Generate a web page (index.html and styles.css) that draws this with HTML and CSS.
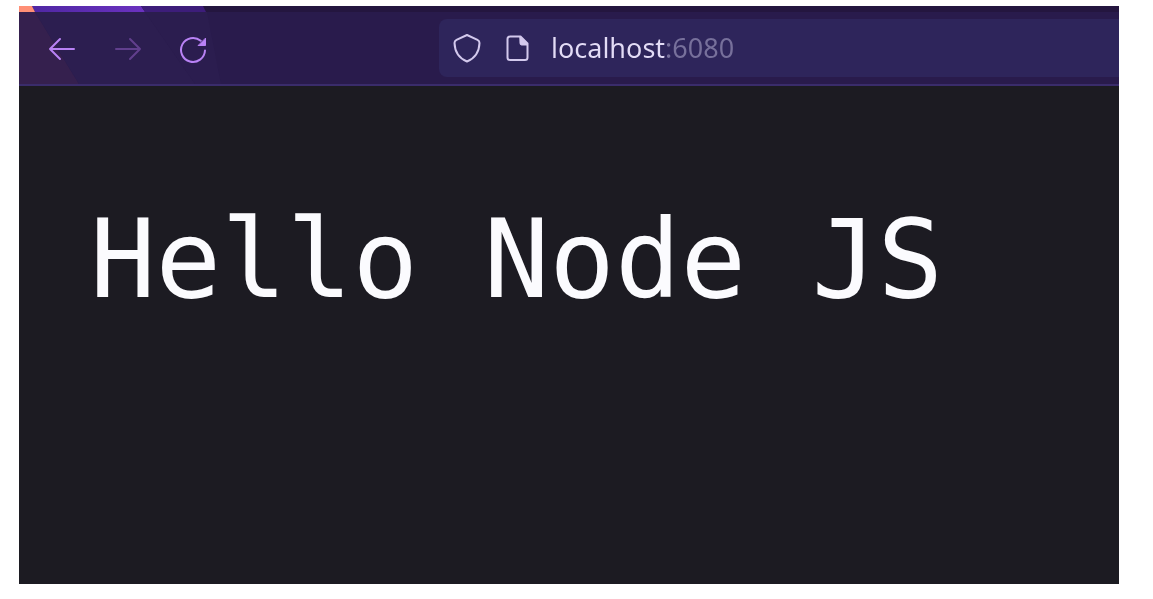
FILE: index.html
```html
<!DOCTYPE html>
<html lang="en">
<head>
<meta charset="utf-8">
<meta name="viewport" content="width=device-width, initial-scale=1">
<title>localhost:6080</title>
<link rel="stylesheet" href="styles.css">
</head>
<body>
<div class="browser">
  <div class="tabstrip" aria-hidden="true">
    <svg class="tabstrip-art" width="220" height="6" viewBox="0 0 220 6">
      <defs><linearGradient id="tab" x1="0" x2="1"><stop offset="0" stop-color="#4f27a3"/><stop offset="1" stop-color="#6b32c0"/></linearGradient></defs>
      <path d="M13 0H122L126 6H16z" fill="url(#tab)"/>
      <path d="M0 0H13L16 6H0z" fill="#ff8f76"/>
      <path d="M122 0H184L187 6H126z" fill="#3d1d7a"/>
    </svg>
  </div>
  <header class="toolbar">
    <svg class="toolbar-art" width="230" height="72" viewBox="0 0 230 72" aria-hidden="true">
      <path d="M0 0H16L60 72H0z" fill="#35204e"/>
      <path d="M16 0H126L176 72H60z" fill="#2c1e50"/>
      <path d="M126 0H188L202 72H176z" fill="#2b1d4f"/>
    </svg>
    <nav class="nav" aria-label="History">
      <button class="nav-button" type="button" aria-label="Back">
        <svg width="32" height="32" viewBox="0 0 32 32"><path d="M28 17H4M14 7L4 17L14 27" /></svg>
      </button>
      <button class="nav-button" type="button" aria-label="Forward" disabled>
        <svg width="32" height="32" viewBox="0 0 32 32"><path d="M4 17H28M18 7L28 17L18 27" /></svg>
      </button>
      <button class="nav-button" type="button" aria-label="Reload">
        <svg width="32" height="32" viewBox="0 0 32 32"><path d="M27 18.500A12 12 0 1 1 22.700 8.700" /><path class="solid" d="M27.500 6.500V13.500H20.500z"/></svg>
      </button>
    </nav>
    <div class="urlbar">
      <svg width="32" height="32" viewBox="0 0 32 32" aria-hidden="true"><path d="M16 3L26.500 7.800Q28.600 8.800 28.500 11C28.200 20 24.500 26 16 29.500C7.500 26 3.800 20 3.500 11Q3.400 8.800 5.500 7.800z" /></svg>
      <svg width="24" height="32" viewBox="0 0 24 32" aria-hidden="true"><path d="M5 4.500H15.500L22.500 11.500V25.500Q22.500 28 20 28H5Q2.500 28 2.500 25.500V7Q2.500 4.500 5 4.500z"/><path class="solid" d="M15 4.500L22.500 12V13H16.500Q15 13 15 11.500z"/></svg>
      <input class="address" type="text" value="localhost:6080" aria-label="Address" spellcheck="false">
    </div>
  </header>
  <main class="page">
    <pre class="output">Hello Node JS</pre>
  </main>
</div>
</body>
</html>
```
FILE: styles.css
```css
* { box-sizing: border-box; }

body {
  margin: 0;
  padding: 6px 34px 15px 19px;
  min-height: 100vh;
  display: flex;
  background: #ffffff;
}

.browser {
  flex: 1;
  min-width: 0;
  display: flex;
  flex-direction: column;
  overflow: hidden;
  background: #1c1b22;
}

.tabstrip {
  height: 6px;
  background: #24163f;
}

.tabstrip-art { display: block; }

.toolbar {
  position: relative;
  display: flex;
  align-items: stretch;
  gap: 220px;
  padding: 7px 0 7px 18px;
  background: #291b4c;
  border-bottom: 2px solid #3a2c6b;
}

.toolbar-art {
  position: absolute;
  top: 0;
  left: 0;
}

.nav {
  position: relative;
  display: flex;
  align-items: center;
  gap: 16px;
}

.nav-button {
  width: 50px;
  height: 50px;
  padding: 0;
  display: grid;
  place-items: center;
  border: 0;
  border-radius: 8px;
  background: none;
  color: #b982f5;
}

.nav-button:disabled { color: #613f8d; }

svg {
  flex: none;
  fill: none;
  stroke: currentColor;
  stroke-width: 2;
  stroke-linecap: round;
  stroke-linejoin: round;
}

.tabstrip-art,
.toolbar-art { stroke: none; }

.solid { fill: currentColor; stroke-width: 1; }

.urlbar {
  flex: 1;
  min-width: 0;
  height: 58px;
  display: flex;
  align-items: center;
  gap: 22px;
  padding-left: 12px;
  border-radius: 8px 0 0 8px;
  background: #2e255b;
  color: #d3c9ed;
}

.address {
  flex: 1;
  min-width: 0;
  height: 40px;
  padding: 0;
  border: 0;
  outline: 0;
  font: 27px/40px "Noto Sans", sans-serif;
  color: transparent;
  background: linear-gradient(to right, #e3dcf6 115px, #77709b 115px);
  -webkit-background-clip: text;
  background-clip: text;
}

.page {
  flex: 1;
  padding: 110px 71px;
}

.output {
  margin: 0;
  font: 109px/128px "DejaVu Sans Mono", monospace;
  color: #fbfbfe;
}
```
